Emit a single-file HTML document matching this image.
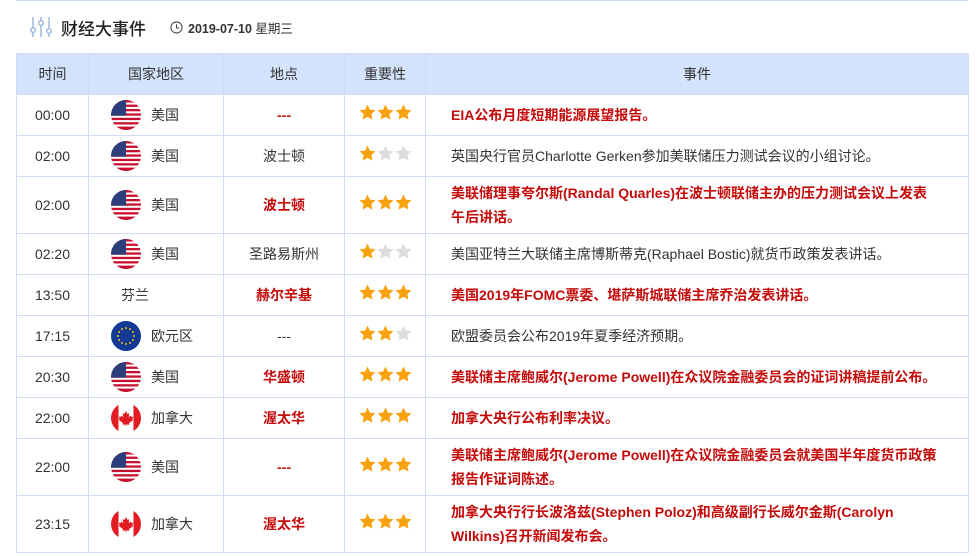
<!DOCTYPE html>
<html><head><meta charset="utf-8">
<style>
*{margin:0;padding:0;box-sizing:border-box}
body{width:979px;height:556px;background:#fff;font-family:"Liberation Sans","Microsoft YaHei","Noto Sans CJK SC",sans-serif;font-size:14px;color:#333;position:relative;overflow:hidden}
.topline{position:absolute;left:16px;top:0;width:952px;height:1px;background:#c9dbf5}
.title{position:absolute;left:29px;top:14px;height:26px;display:flex;align-items:center}
.title .t{font-size:17px;color:#222;margin-left:8px;font-family:"Noto Sans CJK SC",sans-serif;font-weight:500}
.title .d{font-size:12.5px;font-weight:bold;color:#333;margin-left:5px}
table{position:absolute;left:16px;top:53px;width:953px;border-collapse:collapse;table-layout:fixed}
td,th{border:1px solid #cfdcf2;text-align:center;vertical-align:middle;font-family:"Liberation Sans","Noto Sans CJK SC",sans-serif;font-size:14px}
th{background:#d3e3fb;height:41px;font-weight:normal;color:#333}
td.e{text-align:left;padding:0 10px 0 25px;line-height:24px}
.r{color:#c40a0a;font-weight:bold}
.c{display:flex;align-items:center;padding-left:22px}
.c svg{margin-right:10px;flex:none}
.st{display:flex;justify-content:center;gap:1px;margin-top:-6px}
</style></head><body>
<div class="topline"></div>
<div class="title">
<svg width="24" height="24" viewBox="0 0 24 24" fill="none" stroke="#9bb4dc" stroke-width="1.4"><line x1="4" y1="2" x2="4" y2="22"/><circle cx="4" cy="15" r="2.3" fill="#fff"/><line x1="12" y1="2" x2="12" y2="22"/><circle cx="12" cy="8" r="2.3" fill="#fff"/><line x1="20" y1="2" x2="20" y2="22"/><circle cx="20" cy="16" r="2.3" fill="#fff"/></svg>
<span class="t">财经大事件</span>
<svg style="margin-left:24px" width="13" height="13" viewBox="0 0 14 14" fill="none" stroke="#444" stroke-width="1.1"><circle cx="7" cy="7" r="6"/><path d="M7 3.5V7.5H10"/></svg>
<span class="d">2019-07-10 <span style="font-weight:normal">星期三</span></span>
</div>
<svg width="0" height="0" style="position:absolute">
<defs>
<clipPath id="cc"><circle cx="15" cy="15" r="15"/></clipPath>
<g id="us"><g clip-path="url(#cc)"><rect width="30" height="30" fill="#fff"/>
<rect y="0" width="30" height="2.5" fill="#c8102e"/><rect y="4.6" width="30" height="2.3" fill="#c8102e"/><rect y="9" width="30" height="2.3" fill="#c8102e"/><rect y="13.4" width="30" height="2.3" fill="#c8102e"/><rect y="17.8" width="30" height="2.3" fill="#c8102e"/><rect y="22.2" width="30" height="2.3" fill="#c8102e"/><rect y="26.6" width="30" height="3.4" fill="#c8102e"/>
<rect width="15" height="15.7" fill="#2d3f7a"/></g></g>
<g id="eu"><circle cx="15" cy="15" r="15" fill="#123a94"/><g fill="#f5c400"><circle cx="15" cy="7" r="1"/><circle cx="19" cy="8.1" r="1"/><circle cx="21.9" cy="11" r="1"/><circle cx="23" cy="15" r="1"/><circle cx="21.9" cy="19" r="1"/><circle cx="19" cy="21.9" r="1"/><circle cx="15" cy="23" r="1"/><circle cx="11" cy="21.9" r="1"/><circle cx="8.1" cy="19" r="1"/><circle cx="7" cy="15" r="1"/><circle cx="8.1" cy="11" r="1"/><circle cx="11" cy="8.1" r="1"/></g></g>
<g id="ca"><g clip-path="url(#cc)"><rect width="30" height="30" fill="#fff"/><rect width="7.5" height="30" fill="#e31b23"/><rect x="22.5" width="7.5" height="30" fill="#e31b23"/><path d="M15 8l1.5 3 1.8-1-0.6 4.2 2.2-1.8 0.4 1.6 2-0.4-1 2.6 1 0.6-4.3 3.4 0.4 1.6-3-0.4V23h-0.8v-1.6l-3 0.4 0.4-1.6-4.3-3.4 1-0.6-1-2.6 2 0.4 0.4-1.6 2.2 1.8-0.6-4.2 1.8 1z" fill="#e31b23"/></g></g>
<path id="s" d="M8.5 0.5l2.4 5.1 5.6 0.7-4.1 3.8 1 5.5-4.9-2.7-4.9 2.7 1-5.5L0.5 6.3l5.6-0.7z"/>
</defs></svg>
<table>
<colgroup><col style="width:72px"><col style="width:135px"><col style="width:121px"><col style="width:81px"><col></colgroup>
<tr><th>时间</th><th>国家地区</th><th>地点</th><th>重要性</th><th>事件</th></tr>
<tr style="height:41px"><td>00:00</td><td><div class="c"><svg width="30" height="30"><use href="#us"/></svg><span>美国</span></div></td><td class="r">---</td><td><div class="st"><svg width="17" height="17"><use href="#s" fill="#f9a20f"/></svg><svg width="17" height="17"><use href="#s" fill="#f9a20f"/></svg><svg width="17" height="17"><use href="#s" fill="#f9a20f"/></svg></div></td><td class="e r">EIA公布月度短期能源展望报告。</td></tr>
<tr style="height:41px"><td>02:00</td><td><div class="c"><svg width="30" height="30"><use href="#us"/></svg><span>美国</span></div></td><td>波士顿</td><td><div class="st"><svg width="17" height="17"><use href="#s" fill="#f9a20f"/></svg><svg width="17" height="17"><use href="#s" fill="#ddd"/></svg><svg width="17" height="17"><use href="#s" fill="#ddd"/></svg></div></td><td class="e">英国央行官员Charlotte Gerken参加美联储压力测试会议的小组讨论。</td></tr>
<tr style="height:57px"><td>02:00</td><td><div class="c"><svg width="30" height="30"><use href="#us"/></svg><span>美国</span></div></td><td class="r">波士顿</td><td><div class="st"><svg width="17" height="17"><use href="#s" fill="#f9a20f"/></svg><svg width="17" height="17"><use href="#s" fill="#f9a20f"/></svg><svg width="17" height="17"><use href="#s" fill="#f9a20f"/></svg></div></td><td class="e r">美联储理事夸尔斯(Randal Quarles)在波士顿联储主办的压力测试会议上发表<br>午后讲话。</td></tr>
<tr style="height:41px"><td>02:20</td><td><div class="c"><svg width="30" height="30"><use href="#us"/></svg><span>美国</span></div></td><td>圣路易斯州</td><td><div class="st"><svg width="17" height="17"><use href="#s" fill="#f9a20f"/></svg><svg width="17" height="17"><use href="#s" fill="#ddd"/></svg><svg width="17" height="17"><use href="#s" fill="#ddd"/></svg></div></td><td class="e">美国亚特兰大联储主席博斯蒂克(Raphael Bostic)就货币政策发表讲话。</td></tr>
<tr style="height:41px"><td>13:50</td><td><div class="c" style="padding-left:32px"><span>芬兰</span></div></td><td class="r">赫尔辛基</td><td><div class="st"><svg width="17" height="17"><use href="#s" fill="#f9a20f"/></svg><svg width="17" height="17"><use href="#s" fill="#f9a20f"/></svg><svg width="17" height="17"><use href="#s" fill="#f9a20f"/></svg></div></td><td class="e r">美国2019年FOMC票委、堪萨斯城联储主席乔治发表讲话。</td></tr>
<tr style="height:41px"><td>17:15</td><td><div class="c"><svg width="30" height="30"><use href="#eu"/></svg><span>欧元区</span></div></td><td>---</td><td><div class="st"><svg width="17" height="17"><use href="#s" fill="#f9a20f"/></svg><svg width="17" height="17"><use href="#s" fill="#f9a20f"/></svg><svg width="17" height="17"><use href="#s" fill="#ddd"/></svg></div></td><td class="e">欧盟委员会公布2019年夏季经济预期。</td></tr>
<tr style="height:41px"><td>20:30</td><td><div class="c"><svg width="30" height="30"><use href="#us"/></svg><span>美国</span></div></td><td class="r">华盛顿</td><td><div class="st"><svg width="17" height="17"><use href="#s" fill="#f9a20f"/></svg><svg width="17" height="17"><use href="#s" fill="#f9a20f"/></svg><svg width="17" height="17"><use href="#s" fill="#f9a20f"/></svg></div></td><td class="e r">美联储主席鲍威尔(Jerome Powell)在众议院金融委员会的证词讲稿提前公布。</td></tr>
<tr style="height:41px"><td>22:00</td><td><div class="c"><svg width="30" height="30"><use href="#ca"/></svg><span>加拿大</span></div></td><td class="r">渥太华</td><td><div class="st"><svg width="17" height="17"><use href="#s" fill="#f9a20f"/></svg><svg width="17" height="17"><use href="#s" fill="#f9a20f"/></svg><svg width="17" height="17"><use href="#s" fill="#f9a20f"/></svg></div></td><td class="e r">加拿大央行公布利率决议。</td></tr>
<tr style="height:57px"><td>22:00</td><td><div class="c"><svg width="30" height="30"><use href="#us"/></svg><span>美国</span></div></td><td class="r">---</td><td><div class="st"><svg width="17" height="17"><use href="#s" fill="#f9a20f"/></svg><svg width="17" height="17"><use href="#s" fill="#f9a20f"/></svg><svg width="17" height="17"><use href="#s" fill="#f9a20f"/></svg></div></td><td class="e r">美联储主席鲍威尔(Jerome Powell)在众议院金融委员会就美国半年度货币政策<br>报告作证词陈述。</td></tr>
<tr style="height:57px"><td>23:15</td><td><div class="c"><svg width="30" height="30"><use href="#ca"/></svg><span>加拿大</span></div></td><td class="r">渥太华</td><td><div class="st"><svg width="17" height="17"><use href="#s" fill="#f9a20f"/></svg><svg width="17" height="17"><use href="#s" fill="#f9a20f"/></svg><svg width="17" height="17"><use href="#s" fill="#f9a20f"/></svg></div></td><td class="e r">加拿大央行行长波洛兹(Stephen Poloz)和高级副行长威尔金斯(Carolyn<br>Wilkins)召开新闻发布会。</td></tr>
</table>
</body></html>
